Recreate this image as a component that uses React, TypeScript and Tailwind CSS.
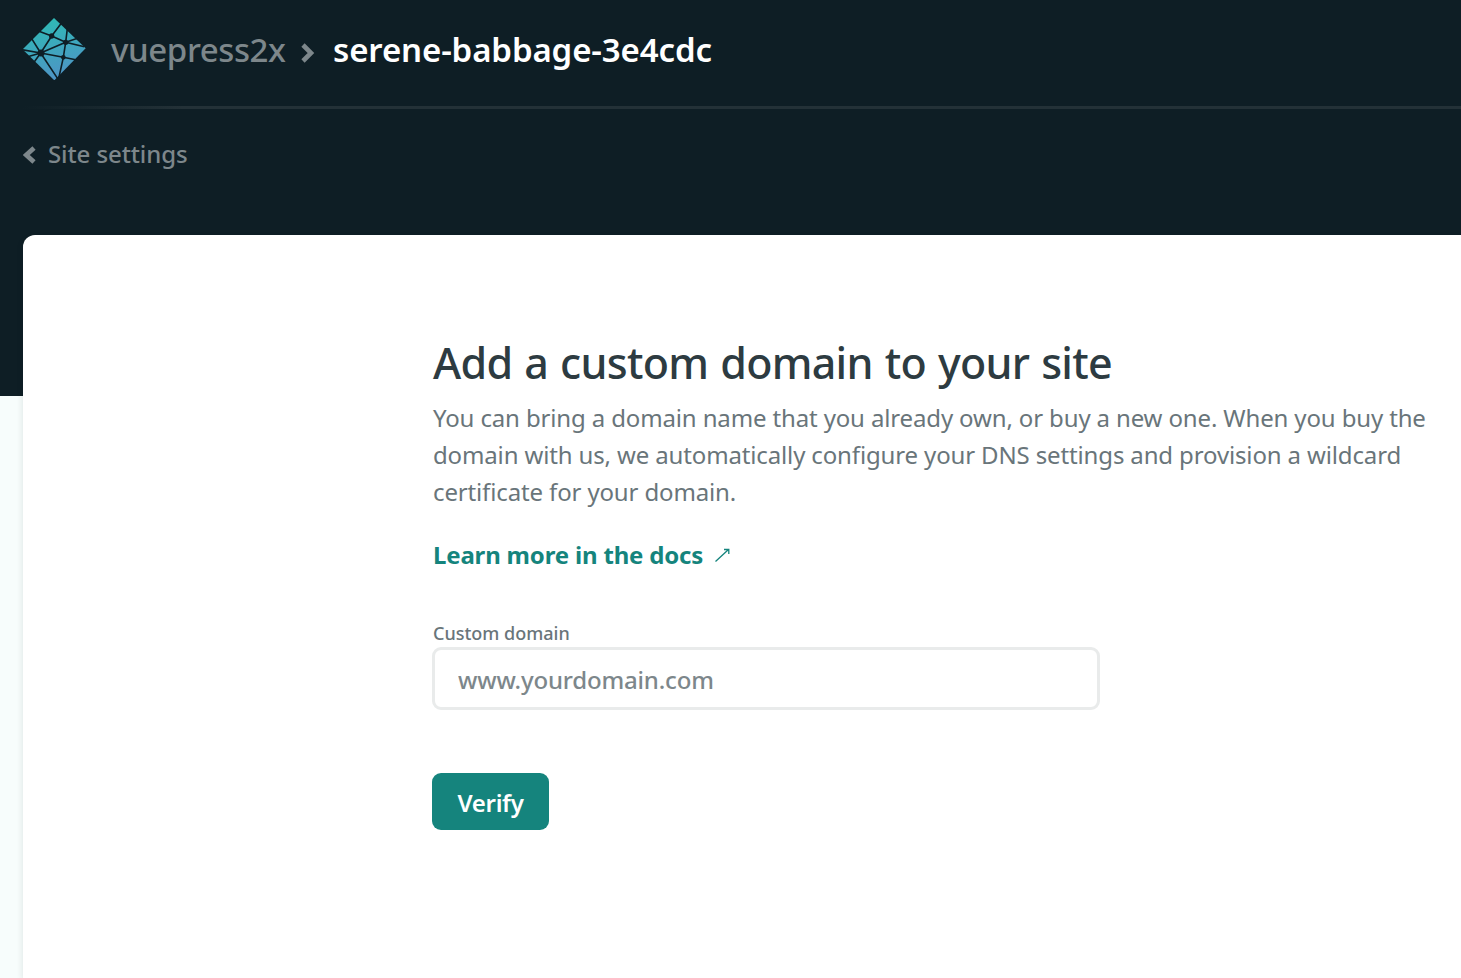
import React from "react";

function Logo() {
  return (
    <svg className="h-[62px] w-[63px] shrink-0" viewBox="28 24 189 186" fill="none">
      <defs>
        <linearGradient id="brand" x1="100" y1="30" x2="150" y2="205" gradientUnits="userSpaceOnUse">
          <stop offset="0" stopColor="#2fb9b5" />
          <stop offset="1" stopColor="#4f93c6" />
        </linearGradient>
      </defs>
      <path d="M121 24L216 115L122 211L27 118Z" fill="url(#brand)" />
      <g stroke="#0e1e25" strokeWidth="4.8">
        <path d="M114 78L144 38M114 78L72 62M114 78L156 97L212 110M114 78L81 129" />
        <path d="M156 97L161 56M156 97L194 84M156 97L81 129L149 142L190 150M156 97L149 142L135 206" />
        <path d="M81 129L54 86M81 129L24 119M81 129L42 140M81 129L60 158M81 129L132 206" />
      </g>
      <g fill="#0e1e25">
        <circle cx="114" cy="78" r="8" />
        <circle cx="156" cy="97" r="8" />
        <circle cx="82" cy="129" r="10.5" />
        <circle cx="149" cy="142" r="7" />
      </g>
    </svg>
  );
}

export default function App() {
  return (
    <div className="h-[978px] w-full overflow-hidden bg-[linear-gradient(#0e1e25_396px,#f7fdfc_396px)] font-['Noto_Sans',sans-serif]">
      <header className="flex h-[106px] items-start pt-[18px] pl-[23px] text-[33px] leading-[64px] font-medium whitespace-nowrap">
        <Logo />
        <a className="ml-[25px] w-[175px] tracking-[-0.4px] text-[#7d878b]">vuepress2x</a>
        <svg className="mt-[25px] ml-[14px] h-5 w-4 shrink-0" viewBox="0 0 16 20" fill="none">
          <path d="M3 2L11 10L3 18" stroke="#7d878b" strokeWidth="4.6" />
        </svg>
        <span className="ml-[17px] font-semibold tracking-[-0.12px] text-white">serene-babbage-3e4cdc</span>
      </header>
      <div className="ml-[23px] h-[3px] bg-[linear-gradient(90deg,#0e1e25,#233137_160px)]" />
      <nav className="flex h-[126px] items-start pt-[27px] pl-[23px] text-[24px] leading-9 font-medium text-[#7d878b]">
        <svg className="mt-[10px] h-[18px] w-[13px]" viewBox="0 0 13 18" fill="none">
          <path d="M11 2L3.2 9L11 16" stroke="#7d878b" strokeWidth="4.8" />
        </svg>
        <a className="ml-[12px] tracking-[-0.1px]">Site settings</a>
      </nav>
      <main className="ml-[23px] h-[743px] rounded-tl-[12px] bg-white pt-[100px] pl-[409px] whitespace-nowrap shadow-[0_3px_7px_rgba(14,30,37,0.12)]">
        <h1 className="pl-px text-[43px] leading-[56px] font-medium tracking-[-0.72px] text-[#2d3b41] [word-spacing:1.5px]">
          Add a custom domain to your site
        </h1>
        <p className="mt-[8px] pl-px text-[24px] leading-[37px] tracking-[-0.14px] text-[#69757a]">
          You can bring a domain name that you already own, or buy a new one. When you buy the
          <br />
          domain with us, we automatically configure your DNS settings and provision a wildcard
          <br />
          certificate for your domain.
        </p>
        <a className="mt-[27px] flex h-9 items-center pl-px text-[24px] leading-9 font-bold tracking-[-0.18px] text-[#15847d]">
          <span className="w-[282px]">Learn more in the docs</span>
          <svg className="h-[15px] w-[15px]" viewBox="0 0 15 15" fill="none" stroke="#15847d" strokeWidth="1.3">
            <path d="M.5 13.5L13.5 1.5M9 1.5H13.8V6" />
          </svg>
        </a>
        <label className="mt-[47px] block pl-px text-[18px] leading-[26px] font-medium text-[#69757a]">Custom domain</label>
        <input
          className="mt-px block h-[63px] w-[668px] rounded-[9px] border-3 border-[#e9ebeb] pt-px pl-[23px] text-[24px] font-medium tracking-[-0.18px] placeholder:text-[#7d878b] placeholder:opacity-100"
          placeholder="www.yourdomain.com"
        />
        <button className="mt-[63px] flex h-[57px] w-[117px] items-center justify-center rounded-[9px] bg-[#15847d] pt-[3px] text-[24px] font-semibold tracking-[-0.3px] text-white">
          Verify
        </button>
      </main>
    </div>
  );
}
